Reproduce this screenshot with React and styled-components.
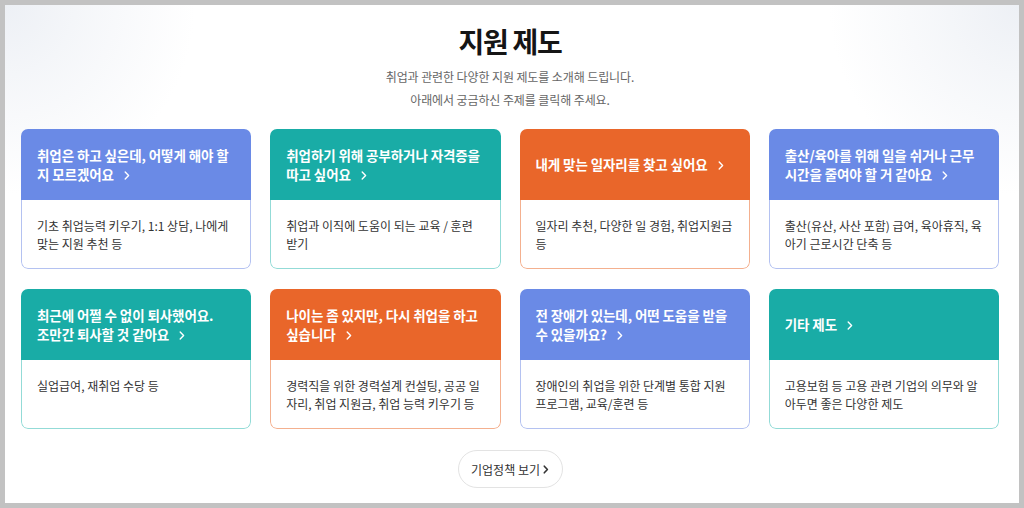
import React from "react";
import styled, { createGlobalStyle } from "styled-components";

const Global = createGlobalStyle`
  html, body { margin: 0; padding: 0; }
  body {
    background: #c2c2c2;
    font-family: "Noto Sans CJK KR", "Noto Sans", sans-serif;
  }
  #root { padding: 5px; }
`;

const Page = styled.div`
  height: 498px;
  box-sizing: border-box;
  padding: 18px 20px 0 16px;
  background:
    radial-gradient(circle at 0 0, #edf0f5 0, rgba(237, 240, 245, 0.55) 80px, rgba(255, 255, 255, 0) 190px),
    radial-gradient(circle at 100% 0, #edf0f5 0, rgba(237, 240, 245, 0.55) 80px, rgba(255, 255, 255, 0) 190px),
    #ffffff;
  display: flex;
  flex-direction: column;
  align-items: stretch;
`;

const Title = styled.h1`
  margin: 0;
  text-align: center;
  font-size: 28px;
  line-height: 36px;
  font-weight: 700;
  color: #151515;
  letter-spacing: -1.3px;
`;

const Intro = styled.div`
  margin-top: 6px;
  text-align: center;
  font-size: 12px;
  line-height: 23px;
  color: #666;
  letter-spacing: -0.1px;
`;

const IntroLine = styled.p`
  margin: 0;
`;

const Grid = styled.div`
  margin-top: 18px;
  display: grid;
  grid-template-columns: repeat(4, 1fr);
  column-gap: 19px;
  row-gap: 20px;
`;

const themes = {
  blue: { bg: "#6a8ae6", border: "#b4c2f1" },
  teal: { bg: "#19aca6", border: "#93dbd7" },
  orange: { bg: "#e9662a", border: "#f4b08f" },
};

const Card = styled.a`
  display: flex;
  flex-direction: column;
  height: 140px;
  border-radius: 7px;
  overflow: hidden;
  text-decoration: none;
  cursor: pointer;
`;

const Head = styled.div`
  height: 71px;
  flex: none;
  box-sizing: border-box;
  padding: 0 16px;
  display: flex;
  align-items: center;
  background: ${(p) => themes[p.$tone].bg};
  color: #fff;
  font-size: 13.5px;
  font-weight: 700;
  line-height: 18.5px;
  letter-spacing: -0.1px;
`;

const HeadText = styled.div`
  white-space: nowrap;
`;

const Line = styled.span`
  display: block;
`;

const Chevron = styled.svg`
  display: inline-block;
  margin-left: 10px;
  vertical-align: 0px;
`;

const Body = styled.div`
  flex: 1;
  box-sizing: border-box;
  padding: 17px 15px 0;
  border: 1px solid ${(p) => themes[p.$tone].border};
  border-top: none;
  border-radius: 0 0 7px 7px;
  background: #fff;
  color: #333;
  font-size: 12px;
  line-height: 18px;
  letter-spacing: 0;
  white-space: nowrap;
`;

const Footer = styled.div`
  display: flex;
  justify-content: center;
  margin-top: 21px;
`;

const MoreButton = styled.button`
  height: 38px;
  width: 105px;
  padding: 0;
  border: 1px solid #e3e3e3;
  border-radius: 19px;
  background: #fff;
  color: #333;
  font-family: inherit;
  font-size: 12px;
  letter-spacing: 0;
  display: flex;
  align-items: center;
  justify-content: center;
  gap: 3px;
  cursor: pointer;
`;

const cards = [
  {
    tone: "blue",
    head: ["취업은 하고 싶은데, 어떻게 해야 할", "지 모르겠어요"],
    body: ["기초 취업능력 키우기, 1:1 상담, 나에게", "맞는 지원 추천 등"],
  },
  {
    tone: "teal",
    head: ["취업하기 위해 공부하거나 자격증을", "따고 싶어요"],
    body: ["취업과 이직에 도움이 되는 교육 / 훈련", "받기"],
  },
  {
    tone: "orange",
    head: ["내게 맞는 일자리를 찾고 싶어요"],
    body: ["일자리 추천, 다양한 일 경험, 취업지원금", "등"],
  },
  {
    tone: "blue",
    head: ["출산/육아를 위해 일을 쉬거나 근무", "시간을 줄여야 할 거 같아요"],
    body: ["출산(유산, 사산 포함) 급여, 육아휴직, 육", "아기 근로시간 단축 등"],
  },
  {
    tone: "teal",
    head: ["최근에 어쩔 수 없이 퇴사했어요.", "조만간 퇴사할 것 같아요"],
    body: ["실업급여, 재취업 수당 등"],
  },
  {
    tone: "orange",
    head: ["나이는 좀 있지만, 다시 취업을 하고", "싶습니다"],
    body: ["경력직을 위한 경력설계 컨설팅, 공공 일", "자리, 취업 지원금, 취업 능력 키우기 등"],
  },
  {
    tone: "blue",
    head: ["전 장애가 있는데, 어떤 도움을 받을", "수 있을까요?"],
    body: ["장애인의 취업을 위한 단계별 통합 지원", "프로그램, 교육/훈련 등"],
  },
  {
    tone: "teal",
    head: ["기타 제도"],
    body: ["고용보험 등 고용 관련 기업의 의무와 알", "아두면 좋은 다양한 제도"],
  },
];

function Arrow() {
  return (
    <Chevron width="6" height="9" viewBox="0 0 6 9" aria-hidden="true">
      <path d="M1.2 1 L4.6 4.5 L1.2 8" fill="none" stroke="#fff" strokeWidth="1.4" strokeLinecap="round" strokeLinejoin="round" />
    </Chevron>
  );
}

export default function App() {
  return (
    <>
      <Global />
      <Page>
        <Title>지원 제도</Title>
        <Intro>
          <IntroLine>취업과 관련한 다양한 지원 제도를 소개해 드립니다.</IntroLine>
          <IntroLine>아래에서 궁금하신 주제를 클릭해 주세요.</IntroLine>
        </Intro>
        <Grid>
          {cards.map((c, i) => (
            <Card key={i}>
              <Head $tone={c.tone}>
                <HeadText>
                  {c.head.map((l, j) => (
                    <Line key={j}>
                      {l}
                      {j === c.head.length - 1 && <Arrow />}
                    </Line>
                  ))}
                </HeadText>
              </Head>
              <Body $tone={c.tone}>
                {c.body.map((l, j) => (
                  <Line key={j}>{l}</Line>
                ))}
              </Body>
            </Card>
          ))}
        </Grid>
        <Footer>
          <MoreButton>
            기업정책 보기
            <svg width="6" height="9" viewBox="0 0 6 9" aria-hidden="true">
              <path d="M1.3 1.2 L4.4 4.5 L1.3 7.8" fill="none" stroke="#333" strokeWidth="1.6" strokeLinecap="round" strokeLinejoin="round" />
            </svg>
          </MoreButton>
        </Footer>
      </Page>
    </>
  );
}
